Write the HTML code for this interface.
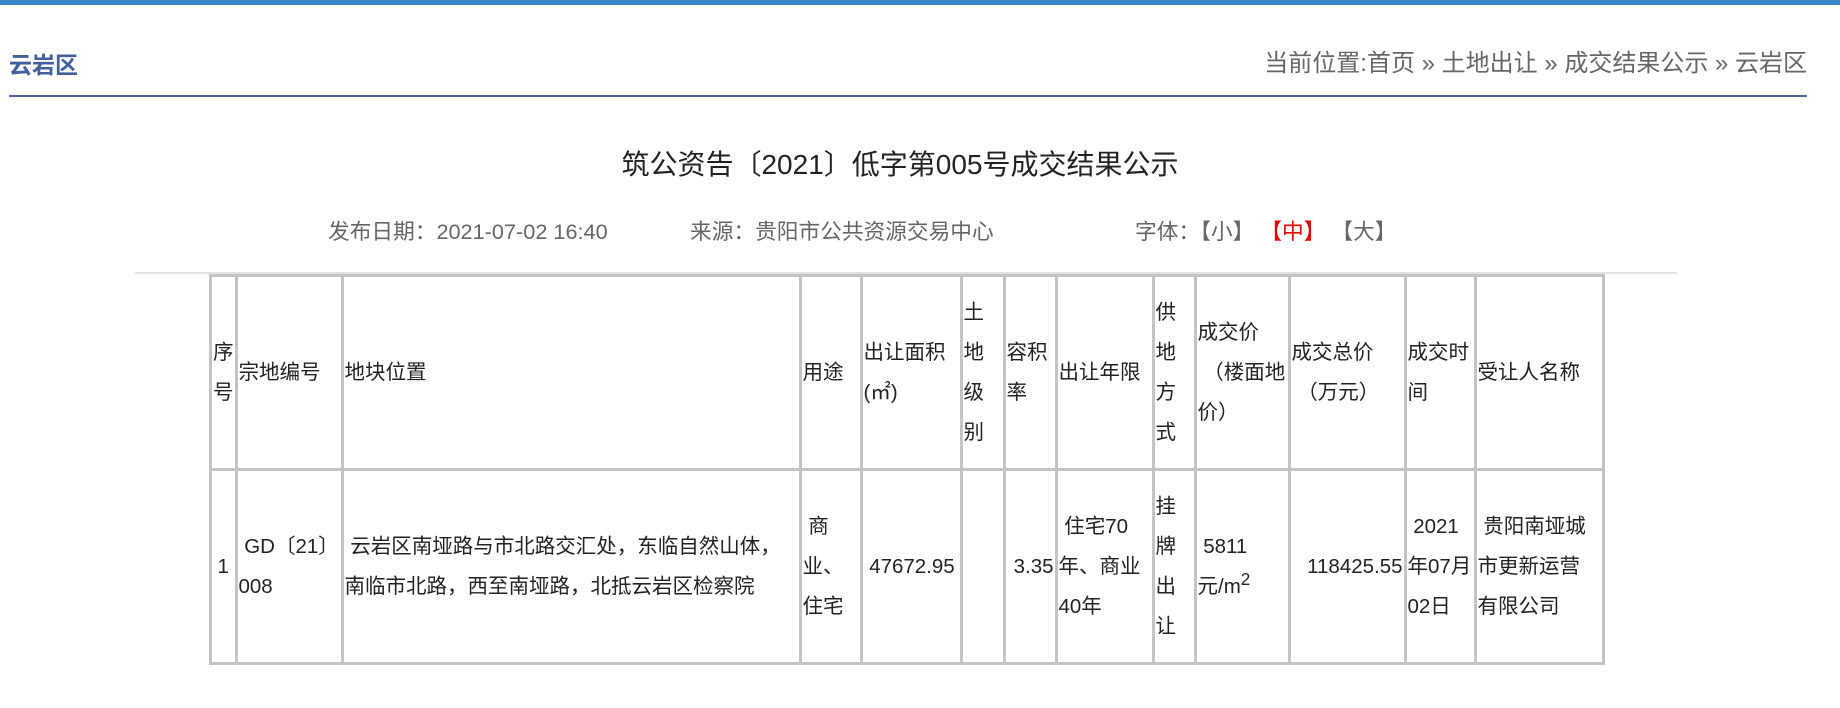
<!DOCTYPE html>
<html><head><meta charset="utf-8"><style>
body{margin:0;width:1840px;height:708px;background:#fff;font-family:"Liberation Sans","Noto Sans CJK SC",sans-serif;position:relative;overflow:hidden;color:#333}
.top{position:absolute;left:0;top:0;width:1840px;height:5px;background:#3a86c8}
.loc{position:absolute;left:9px;top:46px;font-size:23px;font-weight:bold;color:#40609e}
.bc{position:absolute;right:33px;top:43px;font-size:24px;color:#666}
.hl{position:absolute;left:9px;top:95px;width:1798px;height:2px;background:#4d6494}
.title{position:absolute;left:0;width:1800px;text-align:center;top:143px;font-size:28px;color:#222}
.meta{position:absolute;top:215px;font-size:21.7px;color:#666;white-space:nowrap}
.gl{position:absolute;left:135px;top:272px;width:1542px;height:2px;background:#e2e2e2}
table{position:absolute;left:209px;top:274px;border-collapse:collapse;table-layout:fixed;border:3px solid #c4c4c4;font-size:20.5px;line-height:40px;color:#222}
td{border:3px solid #c4c4c4;padding:0 1px;vertical-align:middle;text-align:left;overflow:hidden}
tr.h td{height:191px}
tr.d td{height:191px}
</style></head><body>
<div class="top"></div>
<div class="loc">云岩区</div>
<div class="bc">当前位置:首页 » 土地出让 » 成交结果公示 » 云岩区</div>
<div class="hl"></div>
<div class="title">筑公资告〔2021〕低字第005号成交结果公示</div>
<div class="meta" style="left:328px">发布日期：2021-07-02 16:40</div>
<div class="meta" style="left:690px">来源：贵阳市公共资源交易中心</div>
<div class="meta" style="left:1135px">字体：【小】 <span style="color:#e00">【中】</span> 【大】</div>
<div class="gl"></div>
<table>
<colgroup><col style="width:25px"><col style="width:106px"><col style="width:458px"><col style="width:61px"><col style="width:100px"><col style="width:43px"><col style="width:52px"><col style="width:97px"><col style="width:42px"><col style="width:94px"><col style="width:116px"><col style="width:70px"><col style="width:128px"></colgroup>
<tr class="h"><td>序号</td><td>宗地编号</td><td>地块位置</td><td>用途</td><td>出让面积(㎡)</td><td>土地级别</td><td>容积率</td><td>出让年限</td><td>供地方式</td><td>成交价<br>&nbsp;（楼面地价）</td><td>成交总价<br>&nbsp;（万元）</td><td>成交时间</td><td>受让人名称</td></tr>
<tr class="d"><td style="text-align:center">1</td><td>&nbsp;GD〔21〕<br>008</td><td>&nbsp;云岩区南垭路与市北路交汇处，东临自然山体，<br>南临市北路，西至南垭路，北抵云岩区检察院</td><td>&nbsp;商<br>业、<br>住宅</td><td>&nbsp;47672.95</td><td></td><td style="text-align:right">3.35</td><td>&nbsp;住宅70<br>年、商业<br>40年</td><td>挂牌出让</td><td>&nbsp;5811<br>元/m<sup style="line-height:0">2</sup></td><td style="text-align:right">118425.55</td><td>&nbsp;2021<br>年07月<br>02日</td><td>&nbsp;贵阳南垭城<br>市更新运营<br>有限公司</td></tr>
</table>
</body></html>
